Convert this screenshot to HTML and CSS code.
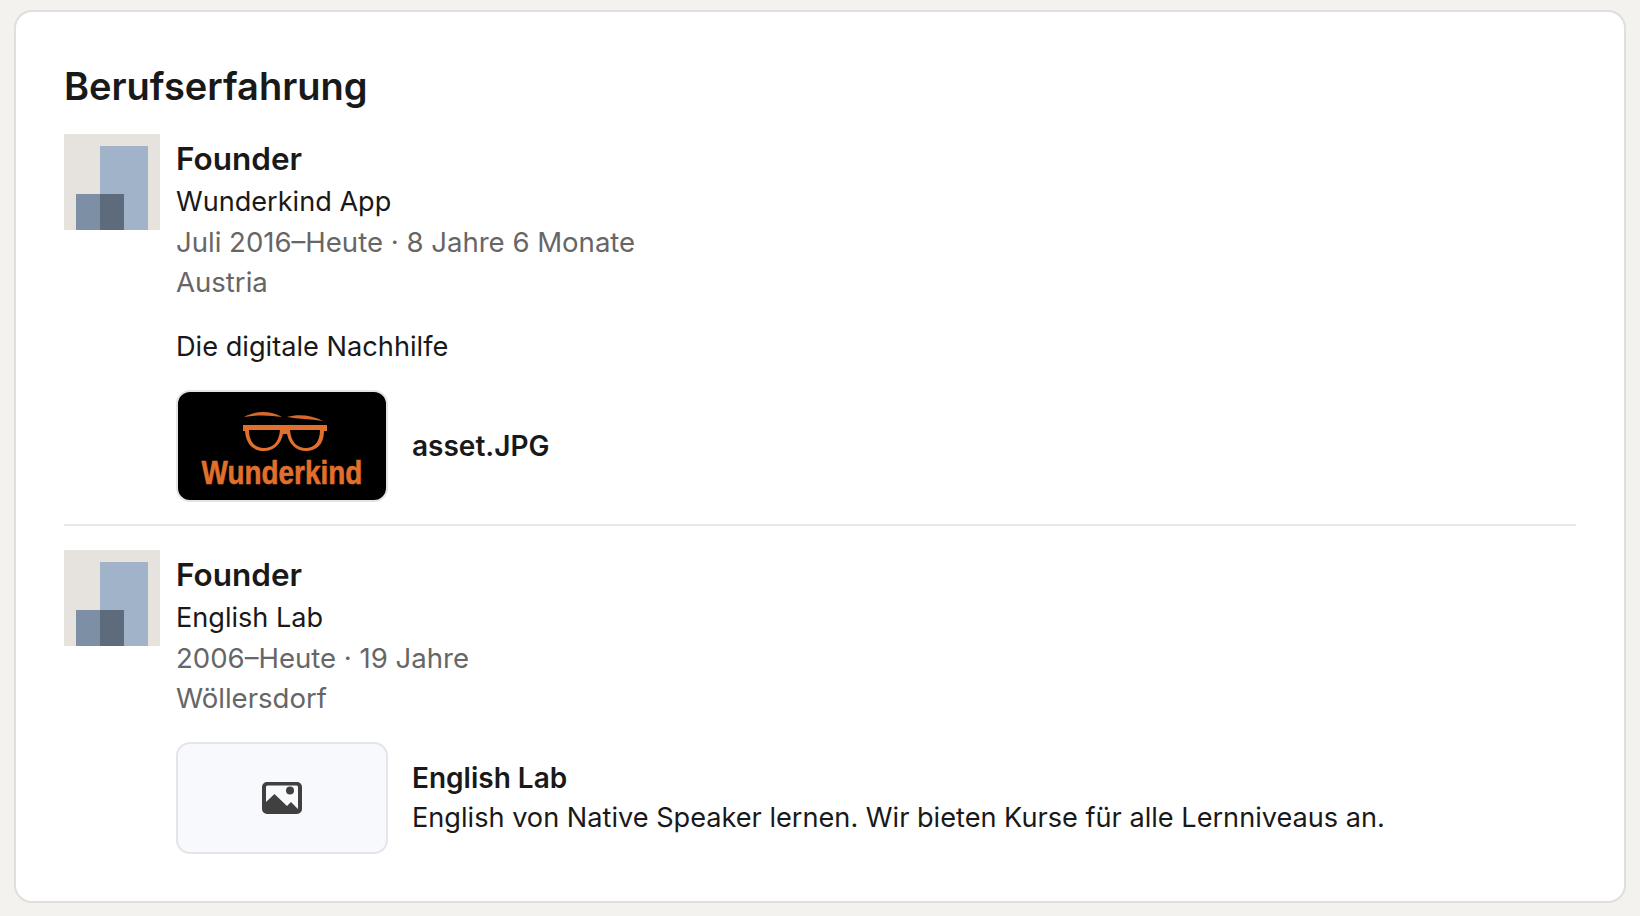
FILE: index.html
```html
<!DOCTYPE html>
<html lang="de">
<head>
<meta charset="utf-8">
<title>Berufserfahrung</title>
<link rel="stylesheet" href="styles.css">
</head>
<body>
<section class="card">
  <h2 class="heading">Berufserfahrung</h2>
  <article class="job job-first">
    <svg class="logo" viewBox="0 0 96 96" aria-hidden="true">
      <rect width="96" height="96" fill="#e6e2dd"/>
      <rect x="36" y="12" width="48" height="84" fill="#a0b3c9"/>
      <rect x="12" y="60" width="24" height="36" fill="#7c8fa5"/>
      <rect x="36" y="60" width="24" height="36" fill="#5e6b7d"/>
    </svg>
    <div class="job-body">
      <div class="role">Founder</div>
      <div class="company">Wunderkind App</div>
      <div class="meta">Juli 2016–Heute · 8 Jahre 6 Monate</div>
      <div class="meta">Austria</div>
      <p class="desc">Die digitale Nachhilfe</p>
      <div class="media">
        <div class="thumb thumb-dark">
          <svg class="wk" viewBox="2 2 208 62" aria-hidden="true">
            <path d="M68 27 C78 21 94 20 106 27 C93 25 80 25 68 27Z M111 27 C122 24 136 25 147 31 C134 29 122 29 111 27Z" fill="#d9682a"/>
            <path d="M67 35 H151 V41 H148 C148 55 140 61 130 61 C120 61 113 54 111 44 H107 C105 54 98 61 88 61 C78 61 70 55 69 41 H67Z M73 40 C73 53 80 58 88 58 C96 58 103 53 104 40Z M114 40 C115 53 122 58 130 58 C137 58 144 53 144 40Z" fill="#e0702c" fill-rule="evenodd"/>
          </svg>
          <div class="wk-text">Wunderkind</div>
        </div>
        <div class="media-text"><div class="media-title">asset.JPG</div></div>
      </div>
    </div>
  </article>
  <hr class="divider">
  <article class="job">
    <svg class="logo" viewBox="0 0 96 96" aria-hidden="true">
      <rect width="96" height="96" fill="#e6e2dd"/>
      <rect x="36" y="12" width="48" height="84" fill="#a0b3c9"/>
      <rect x="12" y="60" width="24" height="36" fill="#7c8fa5"/>
      <rect x="36" y="60" width="24" height="36" fill="#5e6b7d"/>
    </svg>
    <div class="job-body">
      <div class="role">Founder</div>
      <div class="company">English Lab</div>
      <div class="meta">2006–Heute · 19 Jahre</div>
      <div class="meta">Wöllersdorf</div>
      <div class="media media-second">
        <div class="thumb thumb-empty">
          <svg class="pic" viewBox="0 0 40 32" aria-hidden="true">
            <path fill="#404040" fill-rule="evenodd" d="M5 0H35A5 5 0 0 1 40 5V27A5 5 0 0 1 35 32H5A5 5 0 0 1 0 27V5A5 5 0 0 1 5 0ZM4 20 12.500 12 25 24 29 20 36 27V5A1.500 1.500 0 0 0 34.500 3.500H5.500A1.500 1.500 0 0 0 4 5ZM28 12.500A4 4 0 1 0 28 4.500 4 4 0 0 0 28 12.500Z"/>
          </svg>
        </div>
        <div class="media-text">
          <div class="media-title">English Lab</div>
          <div class="media-sub">English von Native Speaker lernen. Wir bieten Kurse für alle Lernniveaus an.</div>
        </div>
      </div>
    </div>
  </article>
</section>
</body>
</html>
```
FILE: styles.css
```css
* { box-sizing: border-box; }
html, body { margin: 0; height: 100%; }
body {
  background: #f3f2ee;
  padding: 10px 14px 13px 14px;
  font-family: Inter, "Liberation Sans", sans-serif;
  overflow: hidden;
}
.card {
  height: 893px;
  background: #fff;
  border: 2px solid #e0dfdb;
  border-radius: 18px;
  padding: 52px 48px 0 48px;
}
.heading {
  margin: 0 0 26px;
  font-size: 38px;
  line-height: 44px;
  font-weight: 600;
  color: #191919;
}
.job { display: flex; gap: 16px; }
.logo { width: 96px; height: 96px; flex: none; display: block; }
.job-body { flex: 1; padding-top: 3px; }
.role { font-size: 31.500px; line-height: 44px; font-weight: 600; color: #191919; }
.company { font-size: 27.100px; line-height: 41px; color: #191919; }
.meta { font-size: 27.550px; line-height: 40px; color: #666; }
.desc { margin: 25px 0 0; font-size: 27.200px; line-height: 40px; color: #191919; }
.media { display: flex; align-items: center; gap: 24px; margin-top: 23px; }
.media-second { margin-top: 24px; }
.thumb {
  width: 212px;
  height: 112px;
  flex: none;
  border-radius: 14px;
  display: flex;
  align-items: center;
  justify-content: center;
}
.thumb-dark {
  background: #000;
  border: 2px solid #e4e4e4;
  flex-direction: column;
  justify-content: flex-start;
}
.thumb-empty { background: #f8f9fd; border: 2px solid #e4e5e8; }
.wk { width: 208px; height: 62px; display: block; flex: none; }
.wk-text {
  margin-top: 4px;
  font-family: "Liberation Sans", sans-serif;
  font-weight: 700;
  font-size: 34px;
  line-height: 28px;
  color: #e0702c;
  -webkit-text-stroke: 0.6px #e0702c;
  transform: scaleX(0.82);
}
.pic { width: 40px; height: 32px; display: block; }
.media-title { font-size: 28px; line-height: 40px; font-weight: 600; color: #191919; }
.media-sub { font-size: 27.150px; line-height: 40px; color: #191919; }
.divider { border: 0; border-top: 2px solid #e8e8e8; margin: 22px 0 24px; }
```
